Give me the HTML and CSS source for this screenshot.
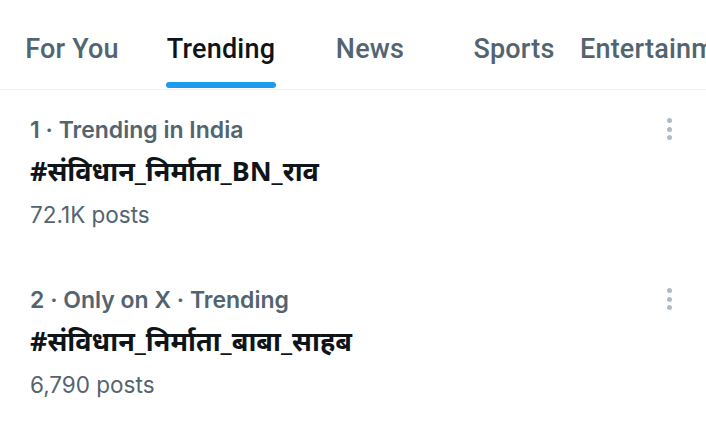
FILE: index.html
```html
<!DOCTYPE html>
<html>
<head>
<meta charset="utf-8">
<link rel="stylesheet" href="styles.css">
</head>
<body>
<nav class="tabs">
  <div class="tab tab-first">For You</div>
  <div class="tab active"><span class="label">Trending</span><span class="bar"></span></div>
  <div class="tab">News</div>
  <div class="tab">Sports</div>
  <div class="tab tab-last">Entertainment</div>
</nav>
<main class="list">
  <section class="trend">
    <div class="trend-body">
      <div class="meta">1 · Trending in India</div>
      <div class="tag">#संविधान_निर्माता_BN_राव</div>
      <div class="count">72.1K posts</div>
    </div>
    <div class="more"><span></span><span></span><span></span></div>
  </section>
  <section class="trend">
    <div class="trend-body">
      <div class="meta">2 · Only on X · Trending</div>
      <div class="tag">#संविधान_निर्माता_बाबा_साहब</div>
      <div class="count">6,790 posts</div>
    </div>
    <div class="more"><span></span><span></span><span></span></div>
  </section>
</main>
</body>
</html>
```
FILE: styles.css
```css
html, body {
  margin: 0;
  padding: 0;
  background: #ffffff;
  width: 706px;
  height: 438px;
  overflow: hidden;
}
body {
  font-family: "Roboto", "Noto Sans", "Noto Sans Devanagari", sans-serif;
}
.tabs {
  display: flex;
  height: 89px;
  border-bottom: 1px solid #eff3f4;
  white-space: nowrap;
  overflow: hidden;
}
.tab {
  position: relative;
  box-sizing: border-box;
  min-width: 144px;
  padding: 33px 22px 0 22px;
  display: flex;
  justify-content: center;
  align-items: flex-start;
  font-size: 27px;
  font-weight: 500;
  color: #536471;
  flex: none;
  letter-spacing: 0.2px;
}
.tab.active {
  min-width: 154px;
  color: #0f1419;
}
.tab-last {
  padding-left: 0;
  margin-left: -6px;
}
.label {
  position: relative;
}
.bar {
  position: absolute;
  left: 22px;
  right: 22px;
  bottom: 1px;
  height: 6px;
  border-radius: 3px;
  background: #1d9bf0;
}
.list {
  display: flex;
  flex-direction: column;
}
.trend {
  display: flex;
  justify-content: space-between;
  padding: 26px 30px 0 30px;
  height: 170px;
  box-sizing: border-box;
}
.meta {
  font-family: "Inter", "Roboto", sans-serif;
  font-size: 23px;
  font-weight: 600;
  color: #536471;
  line-height: 28px;
}
.tag {
  margin-top: 11px;
  font-family: "Noto Sans", "Noto Sans Devanagari", "Inter", sans-serif;
  font-size: 27px;
  font-weight: 700;
  color: #0f1419;
  line-height: 32px;
}
.count {
  margin-top: 14px;
  font-family: "Inter", "Roboto", sans-serif;
  font-size: 22.5px;
  font-weight: 400;
  color: #536471;
  line-height: 28px;
}
.more {
  display: flex;
  flex-direction: column;
  gap: 3.5px;
  padding-top: 2px;
  margin-right: 4px;
}
.more span {
  width: 5px;
  height: 5px;
  border-radius: 50%;
  background: #b0bcc5;
}
```
